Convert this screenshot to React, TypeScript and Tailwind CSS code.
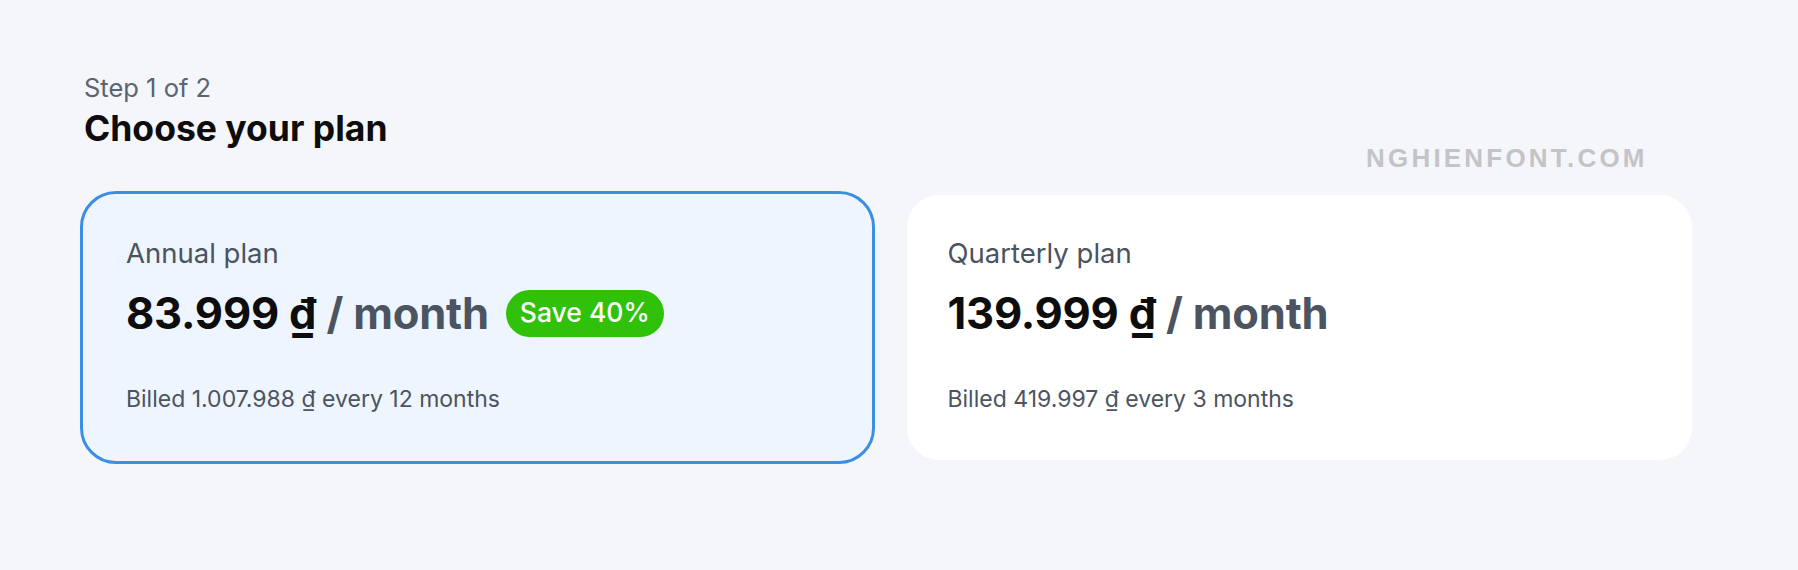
import React from 'react';

type Plan = {
  id: string;
  name: string;
  price: string;
  billed: string;
  badge?: string;
};

const plans: Plan[] = [
  { id: 'annual', name: 'Annual plan', price: '83.999 ₫', billed: 'Billed 1.007.988 ₫ every 12 months', badge: 'Save 40%' },
  { id: 'quarterly', name: 'Quarterly plan', price: '139.999 ₫', billed: 'Billed 419.997 ₫ every 3 months' },
];

function PlanCard({ plan, selected }: { plan: Plan; selected: boolean }) {
  return (
    <div
      className={
        selected
          ? 'flex-1 rounded-[32px] bg-[#eef5fe] outline-[3px] outline-offset-1 outline-solid outline-[#3a8ee6] pl-[42px] pt-[42px] pb-[47px]'
          : 'flex-1 rounded-[32px] bg-white pl-[41px] pt-[42px] pb-[47px]'
      }
    >
      <p className="text-[27.5px] leading-[32px] text-[#4a5360]">{plan.name}</p>
      <div className="mt-[20px] flex h-[48px] items-center">
        <p className="text-[43.5px] leading-[48px] font-bold tracking-[-0.2px]">
          <span className="text-[#0d0d0d]">{plan.price}</span>
          <span className="text-[#4b5460]"> / month</span>
        </p>
        {plan.badge && (
          <span className="ml-[17px] flex h-[47px] items-center rounded-full bg-[#30c10b] px-[14px] text-[26.5px] font-medium text-white">
            {plan.badge}
          </span>
        )}
      </div>
      <p className="mt-[48px] text-[23px] leading-[28px] text-[#4b5460]">{plan.billed}</p>
    </div>
  );
}

export default function App() {
  return (
    <div
      className="relative h-[570px] w-full bg-[#f5f6fa]"
      style={{ fontFamily: 'Inter, "Noto Sans", sans-serif' }}
    >
      <div className="w-[1608px] pl-[84px] pt-[72px] box-content">
        <p className="text-[25.5px] leading-[32px] text-[#5a6472]">Step 1 of 2</p>
        <h1 className="mt-[3px] text-[35.5px] leading-[44px] font-bold text-[#0d0d0d]">Choose your plan</h1>

        <div className="mt-[44px] flex gap-[36px]">
          {plans.map((plan, i) => (
            <PlanCard key={plan.id} plan={plan} selected={i === 0} />
          ))}
        </div>
      </div>

      {/* watermark */}
      <div
        className="absolute left-[1366px] top-[143px] text-[26px] leading-[30px] font-bold tracking-[3.2px] text-[#c3c4c8]"
        style={{ fontFamily: '"Liberation Sans", Arial, sans-serif' }}
      >
        NGHIENFONT.COM
      </div>
    </div>
  );
}
